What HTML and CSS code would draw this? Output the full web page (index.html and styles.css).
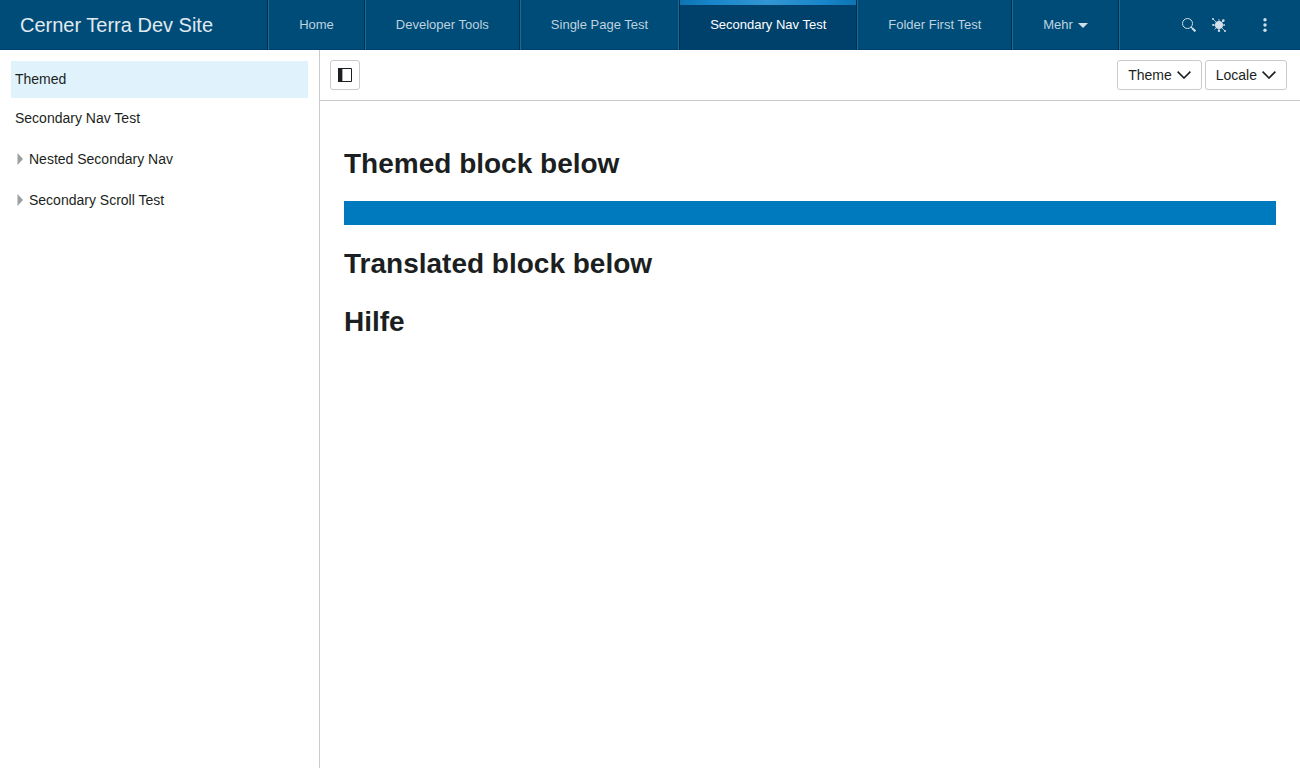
FILE: index.html
```html
<!DOCTYPE html>
<html lang="de">
<head>
<meta charset="utf-8">
<title>Cerner Terra Dev Site</title>
<link rel="stylesheet" href="styles.css">
</head>
<body>
<header class="app-header">
  <div class="brand">Cerner Terra Dev Site</div>
  <nav class="tabs">
    <a class="tab" href="#home">Home</a>
    <a class="tab" href="#tools">Developer Tools</a>
    <a class="tab tab-before-active" href="#single">Single Page Test</a>
    <a class="tab tab-active" href="#secondary" aria-current="page">Secondary Nav Test</a>
    <a class="tab" href="#folder">Folder First Test</a>
    <button class="tab" type="button">Mehr<svg class="caret" width="10" height="5" viewBox="0 0 10 5" aria-hidden="true"><path d="M0 0h10L5 5z" fill="currentColor"/></svg></button>
  </nav>
  <div class="utilities">
    <button class="utility" type="button" aria-label="Search">
      <svg width="14" height="14" viewBox="0 0 14 14" fill="none" stroke="currentColor"><circle cx="5.5" cy="5.5" r="5"/><path d="M9 9l1.5 1.5"/><path d="M10 10l3.4 3.4" stroke-width="2"/></svg>
    </button>
    <button class="utility" type="button" aria-label="Extensions">
      <svg width="14" height="14" viewBox="0 0 14 14" fill="none" stroke="currentColor"><circle cx="7" cy="7" r="4" fill="currentColor" stroke="none"/><path d="M7 1v12M1 7h12M1 1l12 12M11.5 2.5l-9 9" stroke-width=".8"/><g fill="currentColor" stroke="none"><circle cx="1" cy="1" r="1"/><circle cx="11.3" cy="2.6" r="1.3"/><circle cx="1.2" cy="7" r="1.1"/><circle cx="7" cy="12.8" r="1.2"/><circle cx="13" cy="13" r="1"/><circle cx="12.2" cy="7" r=".8"/></g></svg>
    </button>
    <button class="utility utility-menu" type="button" aria-label="Menu">
      <svg width="14" height="14" viewBox="0 0 14 14" fill="currentColor"><circle cx="7" cy="1.7" r="1.7"/><circle cx="7" cy="7" r="1.7"/><circle cx="7" cy="12.3" r="1.7"/></svg>
    </button>
  </div>
</header>
<div class="app-body">
  <nav class="sidebar">
    <a class="side-item side-selected" href="#themed">Themed</a>
    <a class="side-item" href="#secondary-nav">Secondary Nav Test</a>
    <button class="side-item side-folder" type="button"><svg width="6" height="12" viewBox="0 0 6 12" aria-hidden="true"><path d="M.5 0L6 6 .5 12z" fill="currentColor"/></svg>Nested Secondary Nav</button>
    <button class="side-item side-folder" type="button"><svg width="6" height="12" viewBox="0 0 6 12" aria-hidden="true"><path d="M.5 0L6 6 .5 12z" fill="currentColor"/></svg>Secondary Scroll Test</button>
  </nav>
  <main class="main">
    <div class="toolbar">
      <button class="button button-icon" type="button" aria-label="Toggle menu">
        <svg width="14" height="14" viewBox="0 0 14 14"><path d="M.5.5h13v13H.5z" fill="none" stroke="#1c1f21"/><path d="M0 0h4v14H0z" fill="#1c1f21"/><path d="M4 1h1v12H4z" fill="#aaa"/></svg>
      </button>
      <div class="toolbar-end">
        <button class="button" type="button">Theme<svg width="14" height="8" viewBox="0 0 14 8" fill="none" stroke="currentColor" stroke-width="1.6" aria-hidden="true"><path d="M.6.6L7 7 13.4.6"/></svg></button>
        <button class="button" type="button">Locale<svg width="14" height="8" viewBox="0 0 14 8" fill="none" stroke="currentColor" stroke-width="1.6" aria-hidden="true"><path d="M.6.6L7 7 13.4.6"/></svg></button>
      </div>
    </div>
    <div class="content">
      <h1>Themed block below</h1>
      <div class="themed-block"></div>
      <h1>Translated block below</h1>
      <h1>Hilfe</h1>
    </div>
  </main>
</div>
</body>
</html>
```
FILE: styles.css
```css
* {
  box-sizing: border-box;
}

body {
  margin: 0;
  min-height: 100vh;
  display: flex;
  flex-direction: column;
  background: #fff;
  color: #1c1f21;
  font: 14px/20px "Liberation Sans", Arial, sans-serif;
}

button {
  font: inherit;
  color: inherit;
  background: none;
  border: 0;
  margin: 0;
  padding: 0;
  cursor: pointer;
}

a {
  color: inherit;
  text-decoration: none;
}

svg {
  display: block;
  flex: none;
}

.app-header {
  display: flex;
  height: 50px;
  padding: 0 20px;
  background: #004c79;
  color: #d2dfe8;
  box-shadow: inset 0 -1px #00426f;
}

.brand {
  align-self: center;
  color: #e0eaf0;
  font-size: 20px;
  line-height: 24px;
  white-space: nowrap;
}

.tabs {
  display: flex;
  margin: 0 auto;
  border-left: 1px solid #002f4c;
  border-right: 1px solid #1a699b;
}

.tab {
  display: flex;
  align-items: center;
  padding: 0 30px;
  border-left: 1px solid #1a699b;
  border-right: 1px solid #002f4c;
  color: #bfd2de;
  font-size: 13px;
  white-space: nowrap;
}

.tab-before-active {
  border-right-color: #1a699b;
}

.tab-active {
  color: #fff;
  background: linear-gradient(90deg, #0c74b2, #1886ca 18%, #3395d3 50%, #1886ca 82%, #0c74b2) top / 100% 5px no-repeat #00416b;
  border-left-color: #002f4c;
}

.caret {
  margin-left: 5px;
  color: #d2dfe8;
}

.utilities {
  display: flex;
  align-items: center;
}

.utility {
  display: flex;
  align-items: center;
  justify-content: center;
  width: 30px;
  height: 30px;
}

.utility-menu {
  margin-left: 16px;
}

.app-body {
  display: flex;
  flex: 1;
}

.sidebar {
  flex: none;
  width: 320px;
  padding: 11px;
  border-right: 1px solid #c8cacb;
}

.side-item {
  display: flex;
  align-items: center;
  width: 100%;
  height: 37px;
  margin-bottom: 2px;
  padding: 0 4px 2px;
}

.side-selected {
  background: #e0f3fd;
}

.side-folder {
  gap: 6px;
  height: 41px;
  margin: 0;
  padding-left: 6px;
}

.side-folder svg {
  color: #9b9fa1;
}

.main {
  flex: 1;
  min-width: 0;
}

.toolbar {
  display: flex;
  justify-content: space-between;
  padding: 10px 13px 10px 10px;
  border-bottom: 1px solid #c8cacb;
}

.toolbar-end {
  display: flex;
  gap: 3px;
}

.button {
  display: flex;
  align-items: center;
  justify-content: center;
  gap: 5px;
  height: 30px;
  padding: 0 10px;
  border: 1px solid #c8cacb;
  border-radius: 3px;
}

.button-icon {
  width: 30px;
  padding: 0;
}

.content {
  padding: 24px;
}

h1 {
  margin: 20px 0 18px;
  font-size: 28px;
  line-height: 38px;
}

.themed-block {
  height: 24px;
  background: #007abf;
}
```
